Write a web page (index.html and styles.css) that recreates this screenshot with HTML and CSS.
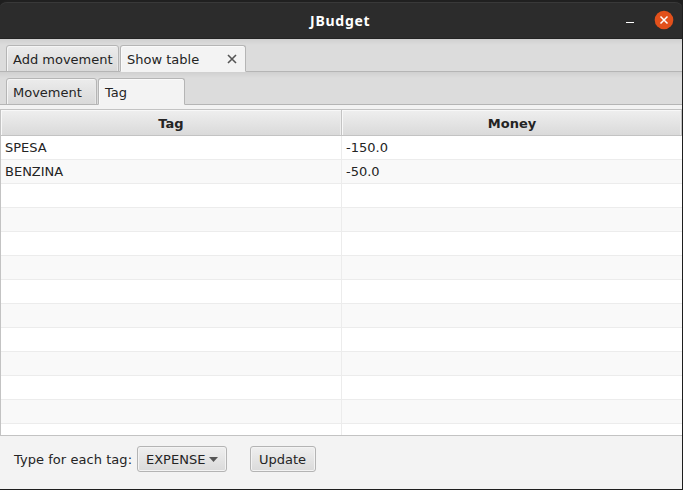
FILE: index.html
```html
<!DOCTYPE html>
<html lang="en">
<head>
<meta charset="utf-8">
<title>JBudget</title>
<link rel="stylesheet" href="styles.css">
</head>
<body>
<div class="window">
  <header class="titlebar">
    <span class="title">JBudget</span>
    <svg class="controls" width="56" height="39" viewBox="0 0 56 39">
      <rect x="0" y="22" width="8" height="1" fill="#fff"/>
      <circle cx="38" cy="20" r="9.3" fill="#e2501b"/>
      <path d="M34.500 16.500l7 7m0-7l-7 7" stroke="#fff" stroke-width="1.500" fill="none"/>
    </svg>
  </header>
  <nav class="tabs">
    <div class="tab add">Add movement</div>
    <div class="tab show active">Show table
      <svg class="close" width="10" height="10" viewBox="0 0 10 10"><path d="M1 1l8 8m0-8l-8 8" stroke="#555" stroke-width="1.600" fill="none"/></svg>
    </div>
  </nav>
  <nav class="tabs inner">
    <div class="tab movement">Movement</div>
    <div class="tab tag active">Tag</div>
  </nav>
  <main class="table">
    <div class="head"><div class="th">Tag</div><div class="th">Money</div></div>
    <div class="rows">
      <div class="row"><div class="td">SPESA</div><div class="td">-150.0</div></div>
      <div class="row"><div class="td">BENZINA</div><div class="td">-50.0</div></div>
      <div class="row"><div class="td"></div><div class="td"></div></div>
      <div class="row"><div class="td"></div><div class="td"></div></div>
      <div class="row"><div class="td"></div><div class="td"></div></div>
      <div class="row"><div class="td"></div><div class="td"></div></div>
      <div class="row"><div class="td"></div><div class="td"></div></div>
      <div class="row"><div class="td"></div><div class="td"></div></div>
      <div class="row"><div class="td"></div><div class="td"></div></div>
      <div class="row"><div class="td"></div><div class="td"></div></div>
      <div class="row"><div class="td"></div><div class="td"></div></div>
      <div class="row"><div class="td"></div><div class="td"></div></div>
      <div class="row"><div class="td"></div><div class="td"></div></div>
    </div>
  </main>
  <footer class="footer">
    <span class="label">Type for each tag:</span>
    <div class="button select"><span>EXPENSE</span><svg width="9" height="5" viewBox="0 0 9 5"><path d="M0 0h9L4.500 5z" fill="#555"/></svg></div>
    <div class="button update">Update</div>
  </footer>
</div>
</body>
</html>
```
FILE: styles.css
```css
* { box-sizing: border-box; }
body {
  margin: 0;
  background: #1e1e1e;
  font: 13px/16px "DejaVu Sans", sans-serif;
  color: #242424;
  white-space: nowrap;
}
.window {
  width: 682px;
  height: 489px;
  display: flex;
  flex-direction: column;
  background: linear-gradient(#1e1e1e 38px, #f3f3f3 38px);
  overflow: hidden;
}
.titlebar {
  height: 39px;
  flex: none;
  display: flex;
  justify-content: flex-end;
  background: #2c2c2c;
  border-top: 2px solid #202020;
  box-shadow: inset 0 1px #393939, inset 0 -1px #232323;
  border-radius: 7px 7px 0 0;
}
.title {
  flex: 1;
  padding: 10px 0 0 310px;
  color: #fff;
  font: bold 14px/17px "Noto Sans", sans-serif;
  letter-spacing: 0.75px;
}
.controls { flex: none; margin-top: -2px; }
.tabs {
  height: 33px;
  flex: none;
  display: flex;
  gap: 1px;
  padding: 6px 0 0 6px;
  background: linear-gradient(#d0d0d0, #dcdcdc 6px);
  box-shadow: inset 0 -1px #b5b5b5;
}
.tab {
  height: 27px;
  display: flex;
  align-items: center;
  padding: 2px 0 0 6px;
  border: 1px solid #b5b5b5;
  border-radius: 3px 3px 0 0;
  background: linear-gradient(#ececec, #d9d9d9);
  box-shadow: inset 1px 1px #f5f5f5, inset -1px 0 #e8e8e8;
}
.tab.active {
  background: #f3f3f3;
  border-bottom-color: #f3f3f3;
  box-shadow: inset 1px 1px #fafafa;
}
.add { width: 113px; }
.show { width: 126px; justify-content: space-between; padding-right: 8px; }
.close { margin-bottom: 2px; }
.movement { width: 91px; }
.tag { width: 87px; }
.table {
  height: 327px;
  flex: none;
  margin-top: 4px;
  border: 1px solid #c3c3c3;
  border-right: 0;
  background: #fff;
  overflow: hidden;
}
.head {
  height: 26px;
  display: grid;
  grid-template: 25px / 341px 340px;
  border-bottom: 1px solid #c3c3c3;
}
.th {
  border-right: 1px solid #c3c3c3;
  background: linear-gradient(#efefef, #dadada);
  box-shadow: inset 1px 1px #f8f8f8, inset -1px 0 #ededed;
  font-weight: bold;
  line-height: 27px;
  text-align: center;
}
.th:last-child { padding-left: 1px; }
.row {
  height: 24px;
  display: grid;
  grid-template-columns: 341px 340px;
  border-bottom: 1px solid #ececec;
}
.row:nth-child(even) { background: #f9f9f9; }
.td { padding: 4px 0 0 4px; border-right: 1px solid #ececec; }
.td:last-child { border-right: 0; }
.footer {
  flex: 1;
  display: flex;
  align-items: flex-start;
  padding: 10px 0 0 14px;
}
.label { width: 123px; padding-top: 6px; letter-spacing: 0.05px; }
.button {
  height: 26px;
  display: flex;
  align-items: center;
  padding: 1px 0 0 8px;
  border: 1px solid #b4b4b4;
  border-radius: 3px;
  background: linear-gradient(#efefef, #dadada);
  box-shadow: inset 0 0 0 1px #f3f3f3;
}
.select { width: 90px; gap: 4px; margin-right: 23px; }
.update { width: 66px; }
```
